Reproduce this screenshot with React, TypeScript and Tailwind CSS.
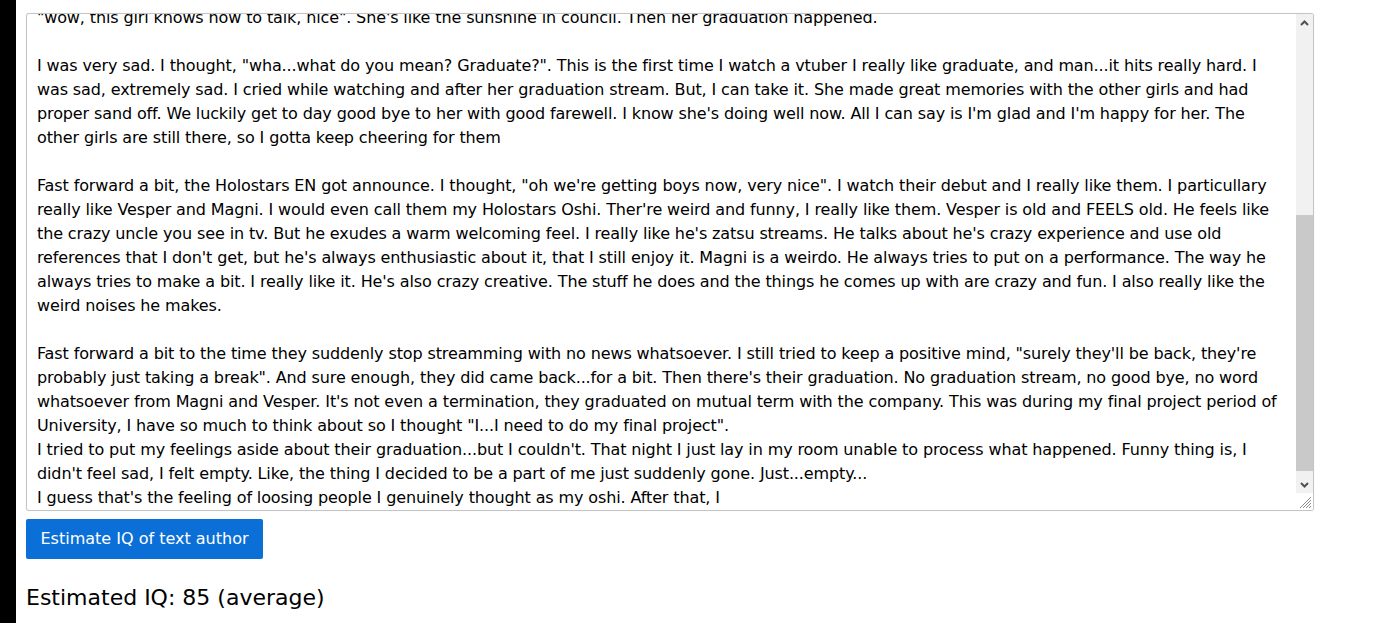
import React from "react";

const lines: string[] = [
  `"wow, this girl knows how to talk, nice". She's like the sunshine in council. Then her graduation happened.`,
  ``,
  `I was very sad. I thought, "wha...what do you mean? Graduate?". This is the first time I watch a vtuber I really like graduate, and man...it hits really hard. I`,
  `was sad, extremely sad. I cried while watching and after her graduation stream. But, I can take it. She made great memories with the other girls and had`,
  `proper sand off. We luckily get to day good bye to her with good farewell. I know she's doing well now. All I can say is I'm glad and I'm happy for her. The`,
  `other girls are still there, so I gotta keep cheering for them`,
  ``,
  `Fast forward a bit, the Holostars EN got announce. I thought, "oh we're getting boys now, very nice". I watch their debut and I really like them. I particullary`,
  `really like Vesper and Magni. I would even call them my Holostars Oshi. Ther're weird and funny, I really like them. Vesper is old and FEELS old. He feels like`,
  `the crazy uncle you see in tv. But he exudes a warm welcoming feel. I really like he's zatsu streams. He talks about he's crazy experience and use old`,
  `references that I don't get, but he's always enthusiastic about it, that I still enjoy it. Magni is a weirdo. He always tries to put on a performance. The way he`,
  `always tries to make a bit. I really like it. He's also crazy creative. The stuff he does and the things he comes up with are crazy and fun. I also really like the`,
  `weird noises he makes.`,
  ``,
  `Fast forward a bit to the time they suddenly stop streamming with no news whatsoever. I still tried to keep a positive mind, "surely they'll be back, they're`,
  `probably just taking a break". And sure enough, they did came back...for a bit. Then there's their graduation. No graduation stream, no good bye, no word`,
  `whatsoever from Magni and Vesper. It's not even a termination, they graduated on mutual term with the company. This was during my final project period of`,
  `University, I have so much to think about so I thought "I...I need to do my final project".`,
  `I tried to put my feelings aside about their graduation...but I couldn't. That night I just lay in my room unable to process what happened. Funny thing is, I`,
  `didn't feel sad, I felt empty. Like, the thing I decided to be a part of me just suddenly gone. Just...empty...`,
  `I guess that's the feeling of loosing people I genuinely thought as my oshi. After that, I`,
  `feel like I've lost something.`,
];

export default function App() {
  return (
    <div className="flex min-h-[623px] w-full bg-white font-['DejaVu_Sans',sans-serif] text-black">
      <div className="w-[16px] shrink-0 bg-black" />
      <main className="flex flex-col pl-[10px] pt-[13px]">
        <div className="relative flex h-[498px] w-[1288px] overflow-hidden rounded-[3px] border border-[#c4c4c4] bg-white shadow-[0_0_1px_rgba(0,0,0,0.15)]">
          <div className="flex-1 overflow-hidden pl-[10px]">
            <div className="-mt-[8px] text-[16px] leading-[24px] tracking-[-0.12px]">
              {lines.map((l, i) => (
                <div key={i} className="h-[24px] whitespace-pre">
                  {l}
                </div>
              ))}
            </div>
          </div>
          <div className="flex w-[17px] shrink-0 flex-col bg-[#f1f1f1]">
            <div className="flex h-[17px] items-center justify-center">
              <svg width="9" height="6" viewBox="0 0 9 6">
                <path d="M1 5 L4.5 1.5 L8 5" fill="none" stroke="#505050" strokeWidth="2" />
              </svg>
            </div>
            <div className="h-[184px]" />
            <div className="h-[256px] bg-[#c9c9c9]" />
            <div className="flex-1" />
            <div className="flex h-[17px] items-center justify-center">
              <svg width="9" height="6" viewBox="0 0 9 6">
                <path d="M1 1 L4.5 4.5 L8 1" fill="none" stroke="#505050" strokeWidth="2" />
              </svg>
            </div>
            <div className="flex h-[17px] items-end justify-end bg-white pb-[1px] pr-[1px]">
              <svg width="13" height="13" viewBox="0 0 13 13">
                <path d="M12 1 L1 12 M12 4 L4 12 M12 7 L7 12 M12 10 L10 12" stroke="#8a8a8a" strokeWidth="1" />
              </svg>
            </div>
          </div>
        </div>
        <button className="mt-[8px] flex h-[40px] w-[237px] items-center justify-center rounded-[2px] bg-[#0b6fd8] text-[16px] leading-[20px] text-white">
          Estimate IQ of text author
        </button>
        <p className="mt-[24px] text-[22px] leading-[30px]">Estimated IQ: 85 (average)</p>
      </main>
    </div>
  );
}
